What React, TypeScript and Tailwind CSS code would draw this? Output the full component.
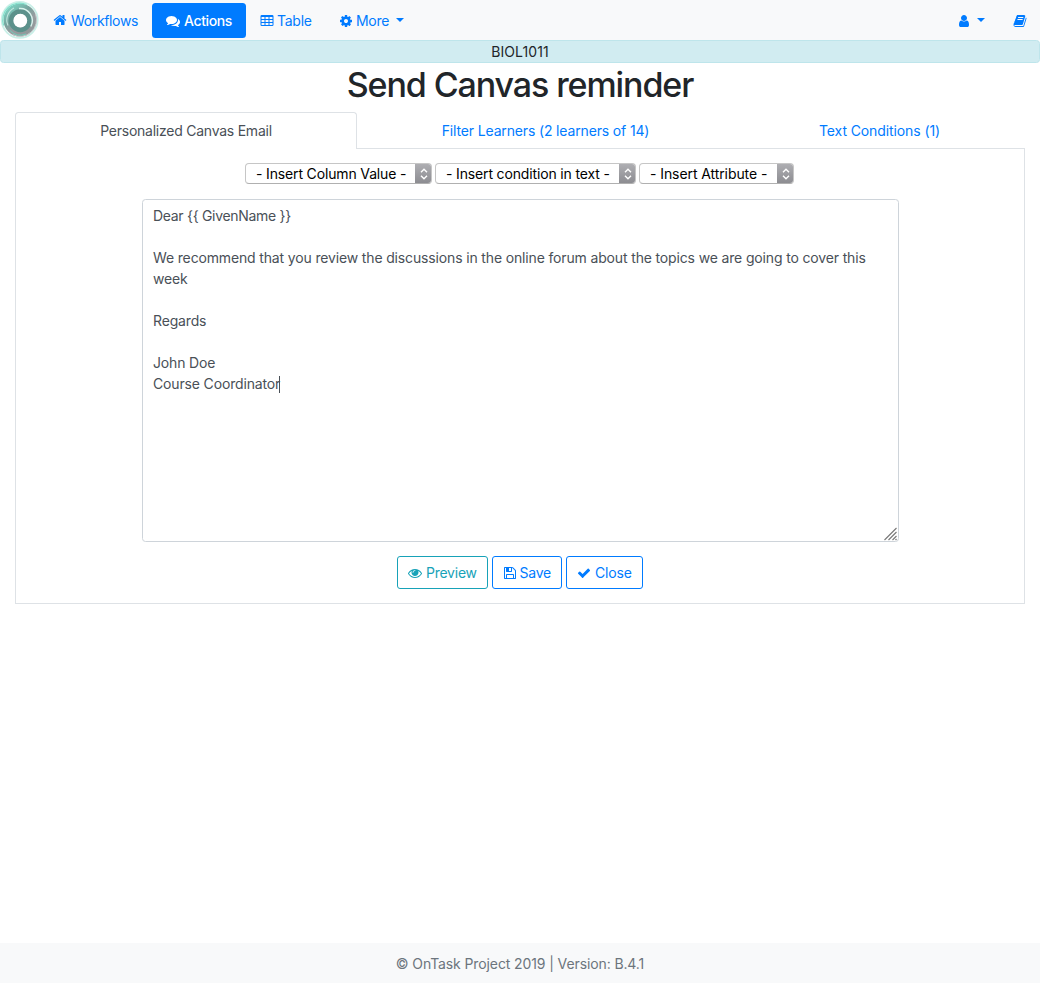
import { useState, type ReactNode } from "react";

const paths = {
  home: "M1472 992v480q0 26-19 45t-45 19h-384v-384h-256v384h-384q-26 0-45-19t-19-45v-480q0-1 .5-3t.5-3l575-474 575 474q1 2 1 6zm223-69l-62 74q-8 9-21 11h-3q-13 0-21-7l-692-577-692 577q-12 8-24 7-13-2-21-11l-62-74q-8-10-7-23.5t11-21.5l719-599q32-26 76-26t76 26l244 204v-195q0-14 9-23t23-9h192q14 0 23 9t9 23v408l219 182q10 8 11 21.5t-7 23.5z",
  comments:
    "M1408 768q0 139-94 257t-256.5 186.5-353.5 68.5q-86 0-176-16-124 88-278 128-36 9-86 16h-3q-11 0-20.5-8t-11.5-21q-1-3-1-6.5t.5-6.5 2-6l2.5-5 3.5-5.5 4-5 4.5-5 4-4.5q5-6 23-25t26-29.5 22.5-29 25-38.5 20.5-44q-124-72-195-177t-71-224q0-139 94-257t256.5-186.5 353.5-68.5 353.5 68.5 256.5 186.5 94 257zm384 256q0 120-71 224.5t-195 176.5q10 24 20.5 44t25 38.5 22.5 29 26 29.5 23 25q1 1 4 4.5t4.5 5 4 5 3.5 5.5l2.5 5 2 6 .5 6.5-1 6.5q-3 14-13 22t-22 7q-50-7-86-16-154-40-278-128-90 16-176 16-271 0-472-132 58 4 88 4 161 0 309-45t264-129q125-92 192-212t67-254q0-77-23-152 129 71 204 178t75 230z",
  table:
    "M224 256h1344q160 0 160 160v1088q0 160-160 160h-1344q-160 0-160-160v-1088q0-160 160-160zM192 544v224h384v-256h-352q-32 0-32 32zM704 512v256h384v-256zM1216 512v256h384v-224q0-32-32-32zM192 896v256h384v-256zM704 896v256h384v-256zM1216 896v256h384v-256zM192 1280v224q0 32 32 32h352v-256zM704 1280v256h384v-256zM1216 1280v256h352q32 0 32-32v-224z",
  cog: "M1152 896q0-106-75-181t-181-75-181 75-75 181 75 181 181 75 181-75 75-181zm512-109v222q0 12-8 23t-20 13l-185 28q-19 54-39 91 35 50 107 138 10 12 10 25t-9 23q-27 37-99 108t-94 71q-12 0-26-9l-138-108q-44 23-91 38-16 136-29 186-7 28-36 28h-222q-14 0-24.5-8.5t-11.5-21.5l-28-184q-49-16-90-37l-141 107q-10 9-25 9-14 0-25-11-126-114-165-168-7-10-7-23 0-12 8-23 15-21 51-66.5t54-70.5q-27-50-41-99l-183-27q-13-2-21-12.5t-8-23.5v-222q0-12 8-23t19-13l186-28q14-46 39-92-40-57-107-138-10-12-10-24 0-10 9-23 26-36 98.5-107.5t94.5-71.5q13 0 26 10l138 107q44-23 91-38 16-136 29-186 7-28 36-28h222q14 0 24.5 8.5t11.5 21.5l28 184q49 16 90 37l142-107q9-9 24-9 13 0 25 10 129 119 165 170 7 8 7 22 0 12-8 23-15 21-51 66.5t-54 70.5q26 50 41 98l183 28q13 2 21 12.5t8 23.5z",
  user: "M1536 1399q0 109-62.5 187t-150.5 78h-854q-88 0-150.5-78t-62.5-187q0-85 8.5-160.5t31.5-152 58.5-131 94-89 134.5-34.5q131 128 313 128t313-128q76 0 134.5 34.5t94 89 58.5 131 31.5 152 8.5 160.5zm-256-887q0 159-112.5 271.5t-271.5 112.5-271.5-112.5-112.5-271.5 112.5-271.5 271.5-112.5 271.5 112.5 112.5 271.5z",
  book: "M1703 478q40 57 18 129l-275 906q-19 64-76.5 107.5t-122.5 43.5h-923q-77 0-148.5-53.5t-99.5-131.5q-24-67-2-127 0-4 3-27t4-37q1-8-3-21.5t-3-19.5q2-11 8-21t16.5-23.5 16.5-23.5q23-38 45-91.5t30-91.5q3-10 .5-30t-.5-28q3-11 17-28t17-23q21-36 42-92t25-90q1-9-2.5-32t.5-28q4-13 22-30.5t22-22.5q19-26 42.5-84.5t27.5-96.5q1-8-3-25.5t-2-26.5q2-8 9-18t18-23 17-21q8-12 16.5-30.5t15-35 16-36 19.5-32 26.5-23.5 36-11.5 47.5 5.5l-1 3q38-9 51-9h761q74 0 114 56t18 130l-274 906q-36 119-71.5 153.5t-128.5 34.5h-869q-27 0-38 15-11 16-1 43 24 70 144 70h923q29 0 56-15.5t35-41.5l300-987q7-22 5-57 38 15 59 43zm-1064 2q-4 13 2 22.5t20 9.5h608q13 0 25.5-9.5t16.5-22.5l21-64q4-13-2-22.5t-20-9.5h-608q-13 0-25.5 9.5t-16.5 22.5zm-83 256q-4 13 2 22.5t20 9.5h608q13 0 25.5-9.5t16.5-22.5l21-64q4-13-2-22.5t-20-9.5h-608q-13 0-25.5 9.5t-16.5 22.5z",
  eye: "M1664 960q-152-236-381-353 61 104 61 225 0 185-131.5 316.5t-316.5 131.5-316.5-131.5-131.5-316.5q0-121 61-225-229 117-381 353 133 205 333.5 326.5t434.5 121.5 434.5-121.5 333.5-326.5zm-720-384q0-20-14-34t-34-14q-125 0-214.5 89.5t-89.5 214.5q0 20 14 34t34 14 34-14 14-34q0-86 61-147t147-61q20 0 34-14t14-34zm848 384q0 34-20 69-140 230-376.5 368.5t-499.5 138.5-499.5-139-376.5-368q-20-35-20-69t20-69q140-229 376.5-368t499.5-139 499.5 139 376.5 368q20 35 20 69z",
  save: "M512 1536h768v-384h-768v384zm896 0h128v-896q0-14-10-38.5t-20-34.5l-281-281q-10-10-34-20t-39-10v416q0 40-28 68t-68 28h-576q-40 0-68-28t-28-68v-416h-128v1280h128v-416q0-40 28-68t68-28h832q40 0 68 28t28 68v416zm-384-928v-320q0-13-9.5-22.5t-22.5-9.5h-192q-13 0-22.5 9.5t-9.5 22.5v320q0 13 9.5 22.5t22.5 9.5h192q13 0 22.5-9.5t9.5-22.5zm640 32v928q0 40-28 68t-68 28h-1344q-40 0-68-28t-28-68v-1344q0-40 28-68t68-28h928q40 0 88 20t76 48l280 280q28 28 48 76t20 88z",
  check:
    "M1671 566q0 40-28 68l-724 724-136 136q-28 28-68 28t-68-28l-136-136-362-362q-28-28-28-68t28-68l136-136q28-28 68-28t68 28l294 295 656-657q28-28 68-28t68 28l136 136q28 28 28 68z",
};

function Icon({ name, className = "" }: { name: keyof typeof paths; className?: string }) {
  return (
    <svg viewBox="0 0 1792 1792" fill="currentColor" className={`size-3.5 shrink-0 ${className}`}>
      <path d={paths[name]} fillRule={name === "table" ? "evenodd" : "nonzero"} />
    </svg>
  );
}

function Caret({ className = "" }: { className?: string }) {
  return (
    <svg viewBox="0 0 8 4" fill="currentColor" className={`h-1 w-2 shrink-0 ${className}`}>
      <path d="M0 0h8L4 4z" />
    </svg>
  );
}

function Logo() {
  return (
    <svg viewBox="0 0 40 40" className="size-10 shrink-0 bg-white" fill="none">
      <defs>
        <linearGradient id="ring" x1="0.1" y1="0" x2="0.8" y2="1">
          <stop offset="0" stopColor="#7cc9bb" />
          <stop offset="0.35" stopColor="#76a39d" />
          <stop offset="0.7" stopColor="#989da0" />
          <stop offset="1" stopColor="#92999b" />
        </linearGradient>
      </defs>
      <circle cx="19.7" cy="19.8" r="18" stroke="#c9efe7" strokeWidth="1.8" />
      <circle cx="20" cy="20" r="11.3" stroke="url(#ring)" strokeWidth="10.5" />
      <circle cx="20.3" cy="20.7" r="9.2" stroke="#5c918b" strokeWidth="4.6" />
      <path d="M3.6 25.5a17 17 0 0 1 23-21" stroke="#7fe0cb" strokeWidth="1.2" />
      <path d="M35.5 14a16.5 16.5 0 0 1-23 20.5" stroke="#c3c8ca" strokeWidth="1" />
      <path d="M19 8.5a12.2 12.2 0 0 1 11.8 18" stroke="#d8f3ed" strokeWidth="1.4" />
      <path d="M8 25.5a13.5 13.5 0 0 1 6-17.5" stroke="#c2e6df" strokeWidth="1.1" />
      <path d="M26 34a15 15 0 0 1-16-3.5" stroke="#71ccb9" strokeWidth="0.9" />
      <circle cx="20.3" cy="20.7" r="6.9" fill="#fff" />
    </svg>
  );
}

function InsertSelect({ label, className }: { label: string; className: string }) {
  return (
    <button
      className={`flex h-[21px] items-stretch overflow-hidden rounded-[4px] border border-[#c6c6c6] border-b-[#b0b0b0] bg-white text-black ${className}`}
    >
      <span className="flex-1 whitespace-nowrap pl-2.5 text-left leading-[20px]">{label}</span>
      <span className="-my-px -mr-px flex w-[17px] items-center justify-center bg-linear-to-b from-[#b0b0b4] to-[#8b8b90]">
        <svg viewBox="0 0 8 12" className="h-3 w-2" fill="none" stroke="#fff" strokeWidth="1.4">
          <path d="M1 4.2 4 1.2l3 3M1 7.8l3 3 3-3" />
        </svg>
      </span>
    </button>
  );
}

function ActionButton({ className, children }: { className: string; children: ReactNode }) {
  return (
    <button className={`flex h-[33px] items-center rounded-[3px] border pl-2.5 whitespace-nowrap ${className}`}>
      {children}
    </button>
  );
}

const message = `

We recommend that you review the discussions in the online forum about the topics we are going to cover this week

Regards

John Doe
Course Coordinator`;

export default function App() {
  const [text] = useState(message);
  return (
    <div className="flex h-[983px] w-[1040px] flex-col bg-white font-['Inter','Liberation_Sans',sans-serif] text-[14px] leading-[21px] tracking-[-0.15px] text-[#212529]">
      <nav className="flex h-10 items-center bg-[#f8f9fa] whitespace-nowrap text-[#007bff]">
        <Logo />
        <a className="flex h-[35px] w-28 items-center pl-3.5">
          <Icon name="home" className="-ml-[0.7px]" />
          <span className="ml-[3.7px] pt-px tracking-[-0.35px]">Workflows</span>
        </a>
        <a className="mt-px flex h-[35px] w-[94px] items-center rounded-[3.5px] bg-[#007bff] pl-3.5 font-medium text-white">
          <Icon name="comments" />
          <span className="ml-1 tracking-[-0.38px]">Actions</span>
        </a>
        <a className="flex h-[35px] w-20 items-center pl-3.5">
          <Icon name="table" />
          <span className="ml-[3px] pt-px tracking-[-0.25px]">Table</span>
        </a>
        <a className="flex h-[35px] w-[92px] items-center pl-[13px]">
          <Icon name="cog" className="mt-px" />
          <span className="ml-[3px] pt-px tracking-[-0.3px]">More</span>
          <Caret className="ml-[7px]" />
        </a>
        <a className="ml-auto flex h-[35px] w-[54px] items-center pl-3">
          <Icon name="user" className="mt-px" />
          <Caret className="ml-1.5" />
        </a>
        <a className="flex h-[35px] w-[41px] items-center pl-[13.5px]">
          <Icon name="book" className="mt-px" />
        </a>
      </nav>
      <div className="h-[23px] rounded-[3.5px] border border-[#bee5eb] bg-[#d1ecf1] text-center tracking-[0.1px]">
        BIOL1011
      </div>
      <h1 className="h-[49px] pt-px text-center text-[34px] leading-[42px] font-[550] tracking-[-1.1px]">
        Send Canvas reminder
      </h1>

      <main className="mx-[15px] flex h-[492px] flex-col">
        <div className="flex h-[37px]">
          <div className="w-[342px] rounded-t-[3.5px] border border-b-0 border-[#dee2e6] pt-[7px] text-center tracking-[-0.24px] text-[#495057]">
            Personalized Canvas Email
          </div>
          <div className="w-[377px] border-b border-[#dee2e6] pt-2 text-center text-[#007bff]">
            Filter Learners (2 learners of 14)
          </div>
          <div className="flex-1 border-b border-[#dee2e6] pt-2 text-center tracking-[-0.1px] text-[#007bff]">
            Text Conditions (1)
          </div>
        </div>
        <div className="flex flex-1 flex-col border border-t-0 border-[#dee2e6] pt-3.5">
          <div className="ml-[229px] flex">
            <InsertSelect label="- Insert Column Value -" className="w-[187px]" />
            <InsertSelect label="- Insert condition in text -" className="ml-[3px] w-[201px]" />
            <InsertSelect label="- Insert Attribute -" className="ml-[3px] w-[155px] tracking-[-0.08px]" />
          </div>
          <div className="relative mt-[15px] ml-[126px] h-[343px] w-[757px] rounded-[3.5px] border border-[#ced4da] px-2.5 pt-[5px] whitespace-pre-wrap text-[#495057]">
            <span className="tracking-[-0.3px]">{"Dear {{ GivenName }}"}</span>
            {text}
            <span className="-my-px -ml-px inline-block h-[17px] w-px bg-[#495057] align-[-3px]" />
            <svg viewBox="0 0 14 14" className="absolute right-0 bottom-0 size-3.5" stroke="#777" strokeWidth="1.1">
              <path d="M.5 13l12-12M4.5 13l8-8M8.5 13l4-4M11.5 13l1-1" />
            </svg>
          </div>
          <div className="mt-3.5 ml-[381px] flex gap-1">
            <ActionButton className="w-[91px] border-[#17a2b8] text-[#17a2b8]">
              <Icon name="eye" />
              <span className="ml-1 tracking-[-0.25px]">Preview</span>
            </ActionButton>
            <ActionButton className="w-[70px] border-[#007bff] text-[#007bff]">
              <Icon name="save" className="-ml-[0.5px]" />
              <span className="ml-[3px] tracking-[-0.25px]">Save</span>
            </ActionButton>
            <ActionButton className="w-[77px] border-[#007bff] text-[#007bff]">
              <Icon name="check" />
              <span className="ml-1">Close</span>
            </ActionButton>
          </div>
        </div>
      </main>

      <footer className="mt-auto flex h-10 items-center justify-center bg-[#f8f9fa] tracking-[-0.11px] text-[#6c757d]">
        © OnTask Project 2019 | Version: B.4.1
      </footer>
    </div>
  );
}
